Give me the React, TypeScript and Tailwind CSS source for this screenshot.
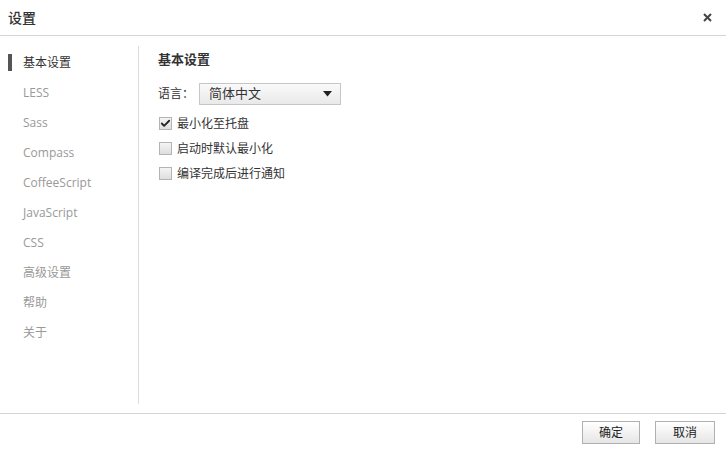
import { Check } from "lucide-react";

const navItems = ["基本设置", "LESS", "Sass", "Compass", "CoffeeScript", "JavaScript", "CSS", "高级设置", "帮助", "关于"];

const options = [
  { label: "最小化至托盘", checked: true },
  { label: "启动时默认最小化", checked: false },
  { label: "编译完成后进行通知", checked: false },
];

const font = { fontFamily: '"Open Sans", "Noto Sans CJK SC", sans-serif' };

export default function App() {
  return (
    <div className="w-[726px] h-[449px] bg-white flex flex-col text-[#333]" style={font}>
      {/* Header */}
      <div className="h-[36px] flex items-center justify-between pl-[8px] pr-[14px] border-b border-[#d4d4d4] shrink-0">
        <span className="text-[14px] font-medium">设置</span>
        <svg width="9" height="9" viewBox="0 0 9 9">
          <path d="M1 1 L8 8 M8 1 L1 8" stroke="#444" strokeWidth="2" />
        </svg>
      </div>

      {/* Body */}
      <div className="flex-1 flex pt-[10px] pb-[9px] min-h-0">
        <div className="w-[139px] border-r border-[#dcdcdc] flex flex-col pt-[2px]">
          {navItems.map((item, i) => (
            <div key={item} className="h-[30px] flex items-center relative pl-[23px]">
              {i === 0 && <div className="absolute left-[8px] top-[6px] w-[4px] h-[17px] bg-[#555]" />}
              <span className={i === 0 ? "text-[12px] text-[#333]" : "text-[12px] text-[#999]"}>{item}</span>
            </div>
          ))}
        </div>

        <div className="flex-1 pl-[19px] pt-[5px]">
          <div className="text-[13px] font-bold leading-[16px]">基本设置</div>
          <div className="flex items-center mt-[16px] h-[22px]">
            <span className="text-[12px] w-[41px]">语言：</span>
            <div className="w-[142px] h-[22px] border border-[#c6c6c6] bg-gradient-to-b from-[#fafafa] to-[#e9e9e9] flex items-center justify-between pl-[9px] pr-[8px]">
              <span className="text-[13px]">简体中文</span>
              <svg width="9" height="6" viewBox="0 0 9 6">
                <path d="M0 0 L9 0 L4.5 5.5 Z" fill="#222" />
              </svg>
            </div>
          </div>
          <div className="mt-[6px] flex flex-col">
            {options.map((o) => (
              <label key={o.label} className="h-[25px] flex items-center gap-[5px] pl-[1px]">
                <span className="w-[13px] h-[13px] border border-[#b4b4b4] bg-gradient-to-b from-[#f4f4f4] to-[#dedede] flex items-center justify-center">
                  {o.checked && <Check className="w-[11px] h-[11px] text-[#222]" strokeWidth={4} />}
                </span>
                <span className="text-[12px]">{o.label}</span>
              </label>
            ))}
          </div>
        </div>
      </div>

      {/* Footer */}
      <div className="h-[36px] border-t border-[#d4d4d4] flex items-center justify-end gap-[15px] pr-[11px] pt-[2px] shrink-0">
        <button className="w-[58px] h-[23px] border border-[#b0b0b0] bg-gradient-to-b from-white to-[#e6e6e6] text-[12px] text-[#222]">确定</button>
        <button className="w-[60px] h-[23px] border border-[#b0b0b0] bg-gradient-to-b from-white to-[#e6e6e6] text-[12px] text-[#222]">取消</button>
      </div>
    </div>
  );
}
